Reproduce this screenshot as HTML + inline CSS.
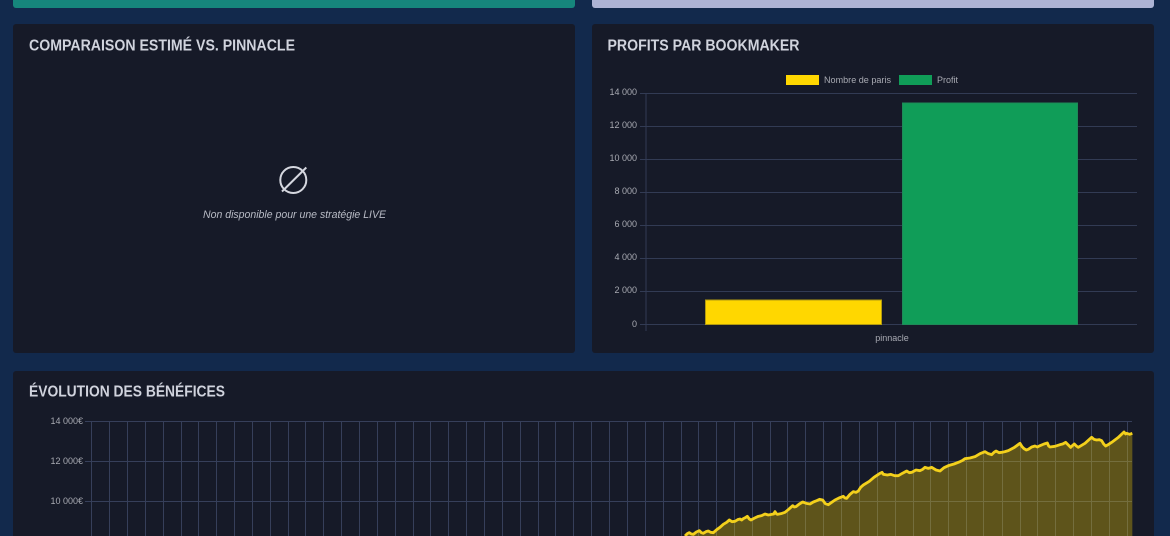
<!DOCTYPE html>
<html lang="fr">
<head>
<meta charset="utf-8">
<title>Tableau de bord</title>
<style>
html,body{margin:0;padding:0;background:#12294c;width:1170px;height:536px;overflow:hidden}
svg{display:block;position:absolute;left:0;top:0;filter:blur(.35px)}
text{font-family:"Liberation Sans",sans-serif}
.t{font-size:16px;font-weight:700;fill:#d0d3dd}
.l{font-size:9px;fill:#a8aab2}
</style>
</head>
<body>
<svg width="1170" height="536" viewBox="0 0 1170 536" xmlns="http://www.w3.org/2000/svg">
<rect width="1170" height="536" fill="#12294c"/>
<!-- top cards -->
<rect x="13" y="-6" width="562" height="14" rx="3" fill="#16867c"/>
<rect x="592" y="-6" width="562" height="14" rx="3" fill="#adb3d4"/>
<!-- cards -->
<rect x="13" y="24" width="562" height="329" rx="3" fill="#161a28"/>
<rect x="592" y="24" width="562" height="329" rx="3" fill="#161a28"/>
<rect x="13" y="371" width="1141" height="175" rx="3" fill="#161a28"/>
<!-- titles -->
<text class="t" x="29" y="50.500" textLength="266" lengthAdjust="spacingAndGlyphs">COMPARAISON ESTIMÉ VS. PINNACLE</text>
<text class="t" x="607.500" y="50.500" textLength="192" lengthAdjust="spacingAndGlyphs">PROFITS PAR BOOKMAKER</text>
<text class="t" x="29" y="396.500" textLength="196" lengthAdjust="spacingAndGlyphs">ÉVOLUTION DES BÉNÉFICES</text>
<!-- empty state -->
<circle cx="293.300" cy="180" r="13" fill="none" stroke="#d5d7df" stroke-width="2"/>
<path d="M282 191.500L306.300 167.500" fill="none" stroke="#d5d7df" stroke-width="2"/>
<text x="203" y="218" font-size="11" font-style="italic" fill="#b8bbc5" textLength="183" lengthAdjust="spacingAndGlyphs">Non disponible pour une stratégie LIVE</text>
<!-- bar chart -->
<path d="M640 93.500H1137M640 126.500H1137M640 159.500H1137M640 192.500H1137M640 225.500H1137M640 258.500H1137M640 291.500H1137M640 324.500H1137M646 93V331" fill="none" stroke="#323b54" stroke-width="1"/>
<rect x="705.500" y="300" width="176" height="24.500" fill="#ffd700" stroke="#b29a10" stroke-width="1"/>
<rect x="902.500" y="103" width="175" height="221.500" fill="#109d58" stroke="#1f8a58" stroke-width="1"/>
<rect x="786" y="75" width="33" height="10" fill="#ffd700"/>
<rect x="899" y="75" width="33" height="10" fill="#109d58"/>
<text class="l" x="824" y="83" textLength="67" lengthAdjust="spacingAndGlyphs">Nombre de paris</text>
<text class="l" x="937" y="83" textLength="21" lengthAdjust="spacingAndGlyphs">Profit</text>
<text class="l" x="637" y="95" text-anchor="end">14 000</text>
<text class="l" x="637" y="128" text-anchor="end">12 000</text>
<text class="l" x="637" y="161" text-anchor="end">10 000</text>
<text class="l" x="637" y="194" text-anchor="end">8 000</text>
<text class="l" x="637" y="227" text-anchor="end">6 000</text>
<text class="l" x="637" y="260" text-anchor="end">4 000</text>
<text class="l" x="637" y="293" text-anchor="end">2 000</text>
<text class="l" x="637" y="327" text-anchor="end">0</text>
<text class="l" x="892" y="341" text-anchor="middle">pinnacle</text>
<!-- evolution chart -->
<path d="M85 421.500H1132M85 461.500H1132M85 501.500H1132" fill="none" stroke="#363f5a" stroke-width="1"/>
<path d="M91.500 421V536M109.500 421V536M127.500 421V536M145.500 421V536M163.500 421V536M181.500 421V536M198.500 421V536M216.500 421V536M234.500 421V536M252.500 421V536M270.500 421V536M288.500 421V536M305.500 421V536M323.500 421V536M341.500 421V536M359.500 421V536M377.500 421V536M395.500 421V536M413.500 421V536M430.500 421V536M448.500 421V536M466.500 421V536M484.500 421V536M502.500 421V536M520.500 421V536M538.500 421V536M555.500 421V536M573.500 421V536M591.500 421V536M609.500 421V536M627.500 421V536M645.500 421V536M663.500 421V536M681.500 421V536M698.500 421V536M716.500 421V536M734.500 421V536M752.500 421V536M770.500 421V536M787.500 421V536M805.500 421V536M823.500 421V536M841.500 421V536M859.500 421V536M877.500 421V536M895.500 421V536M913.500 421V536M930.500 421V536M948.500 421V536M966.500 421V536M983.500 421V536M1002.500 421V536M1020.500 421V536M1037.500 421V536M1055.500 421V536M1073.500 421V536M1091.500 421V536M1109.500 421V536M1127.500 421V536" fill="none" stroke="#363f5a" stroke-width="1"/>
<text class="l" x="83" y="424" text-anchor="end">14 000€</text>
<text class="l" x="83" y="464" text-anchor="end">12 000€</text>
<text class="l" x="83" y="504" text-anchor="end">10 000€</text>
<g transform="translate(670 410) scale(.33333)">
<polygon fill="#ffd700" fill-opacity=".31" points="45,378 58,368 70,373 88,362 100,370 115,363 130,368 150,352 178,330 195,334 210,327 220,326 232,319 243,330 265,319 285,312 305,313 315,305 322,313 345,307 368,287 378,290 398,276 420,282 440,272 458,270 475,284 495,270 520,259 530,265 550,245 565,243 580,225 630,190 640,193 685,197 710,183 725,187 750,182 765,172 785,172 810,183 835,167 870,155 885,146 915,140 945,125 965,134 978,123 995,127 1015,122 1050,100 1062,116 1075,118 1095,108 1110,107 1132,99 1140,111 1170,104 1187,97 1202,112 1213,102 1225,112 1265,82 1280,90 1295,92 1307,108 1325,97 1362,66 1370,70 1387,70 1387,378"/>
<polyline fill="none" stroke="#f3d01c" stroke-width="8.500" stroke-linejoin="round" points="45,378 52,371 58,368 64,372 70,373 79,366 88,362 94,368 100,370 108,365 115,363 122,367 130,368 140,359 150,352 160,343 170,337 178,330 186,335 195,334 203,329 210,327 215,330 220,326 226,323 232,319 238,327 243,330 254,324 265,319 275,317 285,312 295,315 305,313 311,312 315,305 319,311 322,313 333,311 345,307 356,298 368,287 373,291 378,290 388,282 398,276 409,280 420,282 430,276 440,272 449,268 458,270 466,281 475,284 485,277 495,270 507,264 520,259 525,264 530,265 540,253 550,245 558,247 565,243 572,232 580,225 598,214 612,202 630,190 636,187 640,193 652,195 662,193 674,197 685,197 697,190 710,183 718,188 725,187 738,180 750,182 758,178 765,172 775,175 785,172 798,180 810,183 822,173 835,167 852,162 870,155 878,151 885,146 900,144 915,140 930,131 945,125 955,131 965,134 972,127 978,123 987,128 995,127 1005,125 1015,122 1032,113 1050,100 1056,110 1062,116 1069,120 1075,118 1085,111 1095,108 1102,111 1110,107 1122,102 1132,99 1136,108 1140,111 1155,109 1170,104 1178,102 1187,97 1195,105 1202,112 1208,106 1213,102 1219,108 1225,112 1245,100 1265,82 1272,88 1280,90 1288,89 1295,92 1301,102 1307,108 1316,103 1325,97 1344,83 1362,66 1367,72 1370,70 1379,73 1387,70"/>
</g>
</svg>
</body>
</html>
